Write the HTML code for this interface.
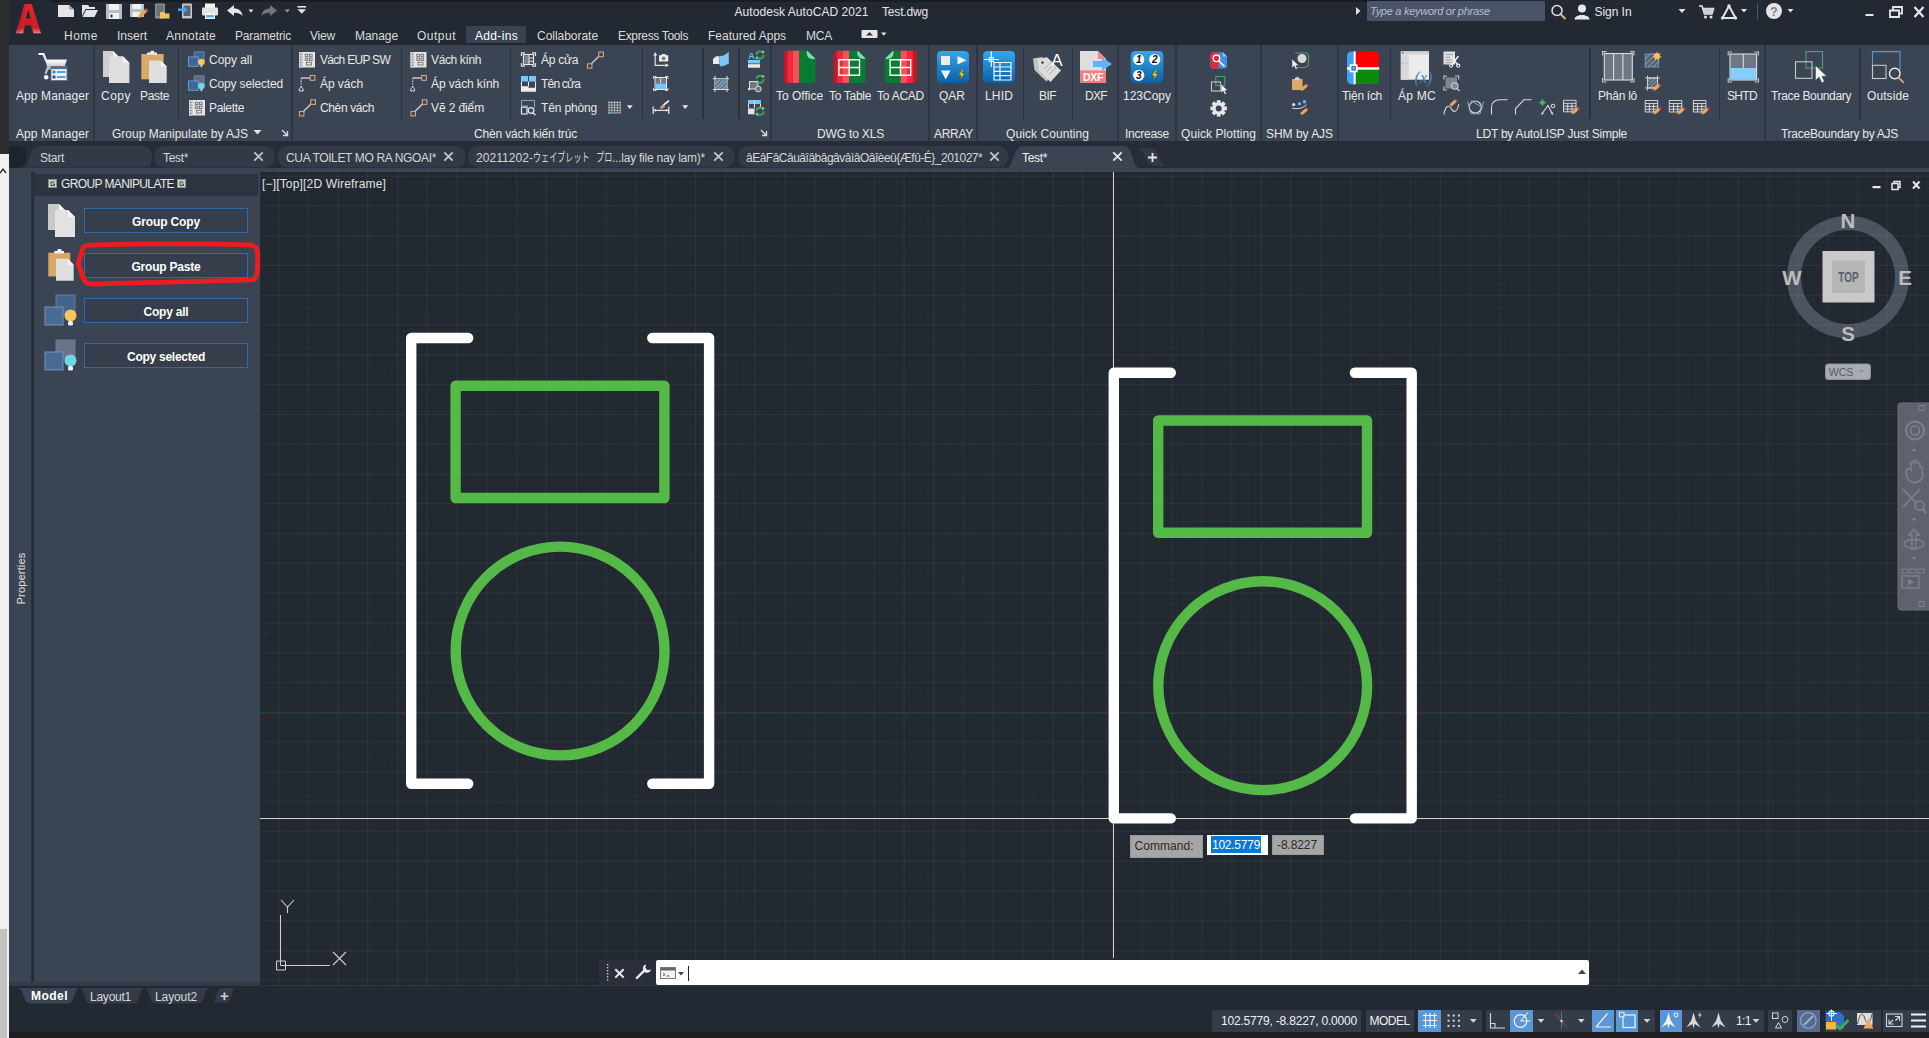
<!DOCTYPE html>
<html><head><meta charset="utf-8"><title>AutoCAD</title>
<style>
html,body{margin:0;padding:0}
body{width:1929px;height:1038px;position:relative;overflow:hidden;background:#222933;font-family:"Liberation Sans","Noto Sans CJK JP",sans-serif;font-size:12px;color:#e8e8e8}
body>div,body>svg{position:absolute;display:block}
</style></head><body>
<div style="left:0px;top:0px;width:9px;height:154px;background:#2b2d30;"></div>
<div style="left:0px;top:154px;width:9px;height:775px;background:#f0f0f0;"></div>
<div style="left:0px;top:929px;width:9px;height:109px;background:#f0f0f0;"></div>
<div style="left:0px;top:929px;width:7px;height:109px;background:#c1c1c1;"></div>
<svg style="left:0px;top:166px;" width="8" height="8" viewBox="0 0 8 8"><path d="M0 7 L3 3 L6 7" stroke="#222" stroke-width="1.3" fill="none"/></svg>
<div style="left:9px;top:0px;width:1920px;height:44px;background:#222933;"></div>
<div style="left:50px;top:0px;width:1400px;height:2px;background:#181c23;"></div>
<div style="left:9px;top:44px;width:1920px;height:97px;background:#3b4453;"></div>
<div style="left:9px;top:141px;width:1920px;height:31px;background:#262d38;"></div>
<div style="left:9px;top:168px;width:1920px;height:4px;background:#3b4453;"></div>
<div style="left:260px;top:172px;width:1669px;height:813px;background:#212830;background-color:#212830;background-image:linear-gradient(to right,rgba(120,135,160,.10) 1px,transparent 1px),linear-gradient(to bottom,rgba(120,135,160,.10) 1px,transparent 1px),linear-gradient(to right,rgba(120,135,160,.035) 1px,transparent 1px),linear-gradient(to bottom,rgba(120,135,160,.035) 1px,transparent 1px);background-size:29.8px 29.8px,29.8px 29.8px,5.96px 5.96px,5.96px 5.96px;background-position:17.9px 3.6px,17.9px 3.6px,17.9px 3.6px,17.9px 3.6px;"></div>
<div style="left:260px;top:713px;width:1669px;height:1px;background:rgba(110,40,50,.75);"></div>
<svg style="left:0px;top:0px;" width="1929" height="1038" viewBox="0 0 1929 1038"><path d="M1113.5 172 V958 M260 818.5 H1929" stroke="#d4d4d4" stroke-width="1" fill="none"/><path d="M468.2 338 H411.2 V783.7 H468.2" stroke="#ffffff" stroke-width="10.4" fill="none" stroke-linecap="round" stroke-linejoin="round"/><path d="M652.3 338 H709.1 V783.7 H652.3" stroke="#ffffff" stroke-width="10.4" fill="none" stroke-linecap="round" stroke-linejoin="round"/><rect x="455.6" y="385.8" width="208.8" height="112.2" stroke="#55b948" stroke-width="10.4" fill="none" stroke-linejoin="round"/><circle cx="560.1" cy="651" r="104.4" stroke="#55b948" stroke-width="10.4" fill="none" stroke-linejoin="round"/><path d="M1170.8 372.7 H1113.8 V818.4000000000001 H1170.8" stroke="#ffffff" stroke-width="10.4" fill="none" stroke-linecap="round" stroke-linejoin="round"/><path d="M1354.9 372.7 H1411.7 V818.4000000000001 H1354.9" stroke="#ffffff" stroke-width="10.4" fill="none" stroke-linecap="round" stroke-linejoin="round"/><rect x="1158.2" y="420.5" width="208.8" height="112.2" stroke="#55b948" stroke-width="10.4" fill="none" stroke-linejoin="round"/><circle cx="1262.7" cy="685.7" r="104.4" stroke="#55b948" stroke-width="10.4" fill="none" stroke-linejoin="round"/><path d="M280.5 915 V965.5 H330 M276.5 961 h9 v9 h-9 z" stroke="#d0d0d0" stroke-width="1" fill="none"/><path d="M281 900 L287.5 907 L294 900 M287.5 907 V913" stroke="#d0d0d0" stroke-width="1.1" fill="none"/><path d="M333 952 L346 965 M346 952 L333 965" stroke="#d0d0d0" stroke-width="1.1" fill="none"/></svg>
<div style="left:262px;top:176.0px;line-height:16px;font-size:12px;color:#e0e0e0;white-space:nowrap;letter-spacing:0.17px;">[−][Top][2D Wireframe]</div>
<div style="left:9px;top:172px;width:24px;height:813px;background:#3b4453;"></div>
<div style="left:31px;top:172px;width:2px;height:813px;background:#2a313c;"></div>
<div style="left:34px;top:172px;width:226px;height:813px;background:#3b4453;"></div>
<div style="left:34px;top:174px;width:224px;height:22px;background:#2c3441;"></div>
<div style="left:34px;top:196px;width:224px;height:786px;background:#3b4453;"></div>
<div style="left:9px;top:982px;width:251px;height:3px;background:#343c4a;"></div>
<div style="left:21px;top:570.5px;line-height:15px;font-size:11px;color:#e0e0e0;white-space:nowrap;letter-spacing:0.18px;transform:translate(-50%,0) rotate(-90deg);transform-origin:50% 50%;">Properties</div>
<svg style="left:48px;top:179px;" width="9" height="9" viewBox="0 0 9 9"><rect x="0.5" y="0.5" width="8" height="8" fill="#cfd3c4" stroke="#8a8f86" stroke-width="1"/><path d="M6.5 3 H3 V6.5 H6.5 V5 H5" stroke="#3b4453" stroke-width="1" fill="none"/></svg>
<svg style="left:177px;top:179px;" width="9" height="9" viewBox="0 0 9 9"><rect x="0.5" y="0.5" width="8" height="8" fill="#cfd3c4" stroke="#8a8f86" stroke-width="1"/><path d="M6.5 3 H3 V6.5 H6.5 V5 H5" stroke="#3b4453" stroke-width="1" fill="none"/></svg>
<div style="left:61px;top:176.0px;line-height:16px;font-size:12px;color:#e8e8e8;white-space:nowrap;letter-spacing:-0.62px;">GROUP MANIPULATE</div>
<div style="left:84px;top:208px;width:164px;height:25px;background:#363e4c;box-sizing:border-box;border:1px solid #2f6aa6;"></div>
<div style="left:166px;top:213.5px;line-height:16px;font-size:12px;color:#ffffff;white-space:nowrap;letter-spacing:-0.13px;font-weight:bold;transform:translateX(-50%);">Group Copy</div>
<div style="left:84px;top:253px;width:164px;height:25px;background:#363e4c;box-sizing:border-box;border:1px solid #2f6aa6;"></div>
<div style="left:166px;top:258.5px;line-height:16px;font-size:12px;color:#ffffff;white-space:nowrap;letter-spacing:-0.21px;font-weight:bold;transform:translateX(-50%);">Group Paste</div>
<div style="left:84px;top:298px;width:164px;height:25px;background:#363e4c;box-sizing:border-box;border:1px solid #2f6aa6;"></div>
<div style="left:166px;top:303.5px;line-height:16px;font-size:12px;color:#ffffff;white-space:nowrap;letter-spacing:-0.21px;font-weight:bold;transform:translateX(-50%);">Copy all</div>
<div style="left:84px;top:343px;width:164px;height:25px;background:#363e4c;box-sizing:border-box;border:1px solid #2f6aa6;"></div>
<div style="left:166px;top:348.5px;line-height:16px;font-size:12px;color:#ffffff;white-space:nowrap;letter-spacing:-0.26px;font-weight:bold;transform:translateX(-50%);">Copy selected</div>
<svg style="left:60px;top:230px;" width="210" height="70" viewBox="60 230 210 70"><path d="M86 245.6 C120 243.6,200 243.4,250 245 C257 245.4,257.6 250,257.7 256 C257.8 266,258.6 276.5,253.5 279.6 C230 281,150 282.3,95 284 C88 284.4,84.3 283,83.2 278 L78.2 263.4 L82.6 249 C83.2 246.6,84 245.7,86 245.6 Z" stroke="#ed1c24" stroke-width="4.8" fill="none" stroke-linejoin="round"/></svg>
<svg style="left:46px;top:200px;" width="34" height="40" viewBox="0 0 34 40"><path d="M2 4 H13 L20 11 V30 H2 Z" fill="#c9c9c9"/><path d="M13 4 V11 H20 Z" fill="#f6f6f6"/><path d="M9 10 H22 L29 17 V37 H9 Z" fill="#e2e2e2"/><path d="M22 10 V17 H29 Z" fill="#f6f6f6"/></svg>
<svg style="left:46px;top:246px;" width="34" height="40" viewBox="0 0 34 40"><rect x="2.3" y="6.7" width="22" height="23.8" fill="#d9a765"/><path d="M8.3 7.5 V5 H11 L12 3 H15 L16 5 H18 V7.5 Z" fill="#f0f0f0"/><path d="M10 12.7 H21.7 L27.7 18.7 V34.7 H10 Z" fill="#dedede"/><path d="M21.7 12.7 V18.7 H27.7 Z" fill="#f6f6f6"/></svg>
<svg style="left:44px;top:293px;" width="36" height="36" viewBox="0 0 36 36"><rect x="12" y="2" width="19" height="19" fill="#45648c" stroke="#5d7fa3" stroke-width="1"/><rect x="1" y="14" width="18" height="18" fill="#4a6a93" stroke="#6f93bb" stroke-width="1"/><circle cx="26.5" cy="22.5" r="6" fill="#f7c35f"/><rect x="24" y="28" width="5" height="4.5" rx="1.5" fill="#f0f0f0"/></svg>
<svg style="left:44px;top:338px;" width="36" height="36" viewBox="0 0 36 36"><rect x="12" y="2" width="19" height="19" fill="#6b7486" stroke="#5d7fa3" stroke-width="1"/><rect x="1" y="14" width="18" height="18" fill="#4a6a93" stroke="#6f93bb" stroke-width="1"/><circle cx="26.5" cy="22.5" r="6" fill="#6fd6e3"/><rect x="24" y="28" width="5" height="4.5" rx="1.5" fill="#f0f0f0"/></svg>
<div style="left:9px;top:985px;width:1920px;height:23px;background:#222933;"></div>
<div style="left:9px;top:985.3px;width:1920px;height:1.2px;background:#313845;"></div>
<div style="left:9px;top:1008px;width:1920px;height:24px;background:#222933;"></div>
<div style="left:9px;top:1032px;width:1920px;height:6px;background:#1f1f21;"></div>
<svg style="left:0px;top:985px;" width="260" height="22" viewBox="0 0 260 22"><path d="M18 3 C24 3,23 18.5,30 18.5 H68 C75 18.5,74 3,79.5 3 Z" fill="#3b4453"/><path d="M79.5 3 C85 3,84 18.5,90 18.5 H134 C140 18.5,139 3,144.5 3 Z" fill="#333b48"/><path d="M144.5 3 C150 3,149 18.5,155 18.5 H199 C205 18.5,204 3,210 3 Z" fill="#333b48"/><path d="M221 3 H236 C231 3,232 17.5,227 17.5 H212 C217 17.5,216 3,221 3 Z" fill="#333b48"/></svg>
<div style="left:31px;top:988.0px;line-height:16px;font-size:12px;color:#ffffff;white-space:nowrap;letter-spacing:0.47px;font-weight:bold;">Model</div>
<div style="left:90px;top:988.5px;line-height:16px;font-size:12px;color:#d8d8d8;white-space:nowrap;letter-spacing:-0.24px;">Layout1</div>
<div style="left:155px;top:988.5px;line-height:16px;font-size:12px;color:#d8d8d8;white-space:nowrap;letter-spacing:-0.10px;">Layout2</div>
<div style="left:224.5px;top:985.5px;line-height:19px;font-size:15px;color:#d0d0d0;white-space:nowrap;font-weight:bold;transform:translateX(-50%);">+</div>
<div style="left:599px;top:960px;width:57px;height:25px;background:#2a303b;"></div>
<div style="left:655.6px;top:960px;width:933px;height:25px;background:#ffffff;border-radius:2px;"></div>
<svg style="left:600px;top:960px;" width="56" height="25" viewBox="0 0 56 25"><path d="M7.6 4 V21.5" stroke="#c4c4c4" stroke-width="1.4" stroke-dasharray="1.4 1.6"/><path d="M15.3 9.2 L23.7 17.6 M23.7 9.2 L15.3 17.6" stroke="#ececec" stroke-width="2"/><path d="M36.8 18 L45 9.8" stroke="#ececec" stroke-width="2.4" stroke-linecap="round"/><path d="M46 4.6 A4.1 4.1 0 1 0 51 9.6 L47.6 10.2 L45.4 8 Z" fill="#ececec"/></svg>
<svg style="left:659.6px;top:967px;" width="26" height="13" viewBox="0 0 26 13"><rect x="0.5" y="0.5" width="15" height="11" fill="#f4f4f4" stroke="#777" stroke-width="1"/><rect x="1" y="1" width="14" height="2.5" fill="#666"/><path d="M3 6 l2 1.5 l-2 1.5 M6.5 9 h3" stroke="#555" stroke-width="1" fill="none"/><path d="M18 5 h6 l-3 3.5 z" fill="#444"/></svg>
<div style="left:687.6px;top:965.5px;width:1.2px;height:15.5px;background:#222;"></div>
<svg style="left:1577px;top:968px;" width="10" height="8" viewBox="0 0 10 8"><path d="M1 6 L5 1.5 L9 6 Z" fill="#444"/></svg>
<div style="left:1130px;top:835px;width:73px;height:23px;background:#a6a6a6;box-sizing:border-box;border:1px solid #969696;"></div>
<div style="left:1134.5px;top:837.5px;line-height:16px;font-size:12px;color:#2a2a2a;white-space:nowrap;letter-spacing:0.04px;">Command:</div>
<div style="left:1206.7px;top:834.8px;width:61.3px;height:20px;background:#ffffff;"></div>
<div style="left:1211px;top:836.3px;width:49.7px;height:16.6px;background:#0a78d7;"></div>
<div style="left:1212px;top:837.0px;line-height:16px;font-size:12px;color:#ffffff;white-space:nowrap;letter-spacing:-0.25px;">102.5779</div>
<div style="left:1271.6px;top:835px;width:52.4px;height:19.8px;background:#a6a6a6;box-sizing:border-box;border:1px solid #969696;"></div>
<div style="left:1277px;top:837.0px;line-height:16px;font-size:12px;color:#2a2a2a;white-space:nowrap;letter-spacing:-0.10px;">-8.8227</div>
<svg style="left:10px;top:0px;" width="40" height="38" viewBox="10 0 40 38"><defs><linearGradient id="ag" x1="0" y1="0" x2="0" y2="1"><stop offset="0" stop-color="#e2282c"/><stop offset=".82" stop-color="#cf1f28"/><stop offset=".96" stop-color="#e8646a"/><stop offset="1" stop-color="#f4a8a0"/></linearGradient></defs><path fill-rule="evenodd" d="M24.5 4 H31.7 L41 33.3 H33.4 L31 25.2 H24.9 L23.3 33.3 H15.8 Z M28.3 9.7 L30.9 18.4 H25.5 Z" fill="url(#ag)"/><path d="M24.5 4 L27 4 L19 33.3 H15.8 Z" fill="#b0141c" opacity=".35"/><path d="M24.2 21 L31.5 18.4 L32.5 22 L24.6 25.2 Z" fill="#b0141c" opacity=".35"/></svg>
<svg style="left:0px;top:0px;" width="320" height="24" viewBox="0 0 320 24"><path d="M58 5 H69 L74 9.5 V17 H58 Z" fill="#e4e4e4"/><path d="M69 5 V9.5 H74 Z" fill="#9aa0a8"/><path d="M82 5 H88 L89.5 7 H95 V9 H85.5 L82 16 Z" fill="#e4e4e4"/><path d="M86 10 H98 L94.5 17 H82.5 Z" fill="#e4e4e4"/><path d="M106 4 H122 V19 H106 Z" fill="#b9bec6"/><rect x="109" y="4" width="10" height="6" fill="#f2f2f2"/><rect x="109" y="13" width="10" height="6" fill="#f2f2f2"/><rect x="110.5" y="14.5" width="2" height="3" fill="#333"/><path d="M130 4 H144 V17 H130 Z" fill="#b9bec6"/><rect x="132.5" y="4" width="9" height="5" fill="#f2f2f2"/><rect x="132.5" y="12" width="8" height="5" fill="#f2f2f2"/><path d="M138 18 L139 14.5 L144.5 9.5 L147 12 L141.5 17 Z" fill="#e9a15a"/><path d="M144.5 9.5 L145.8 8.3 L148.2 10.8 L147 12 Z" fill="#e05a5a"/><rect x="155" y="3.5" width="10" height="15" rx="1" fill="#8b9097"/><rect x="156.5" y="5" width="7" height="11" fill="#6d7279"/><path d="M160 12 H164 L165 13.5 H169.5 V18.5 H160 Z" fill="#f3c35a"/><rect x="182" y="3.5" width="10" height="15" rx="1" fill="#c4c8ce"/><rect x="183.5" y="5.5" width="7" height="10.5" fill="#5c626b"/><path d="M178 8.5 H183.5 V6.5 L187.5 9.7 L183.5 13 V11 H178 Z" fill="#3ea7ee"/><rect x="205" y="3.5" width="10" height="5" fill="#f4f4f4"/><rect x="202" y="7.5" width="16" height="8" rx="1" fill="#e4e4e4"/><rect x="205" y="13" width="10" height="6" fill="#f8f8f8"/><rect x="206" y="15" width="8" height="2.5" fill="#56b4ea"/><path d="M227 10.5 L234 5 V8.5 C239 8.5,242 11,242.5 16 C240.5 13.5,238 12.8,234 12.8 V16 Z" fill="#e4e4e4"/><path d="M248.5 9.5 h5 l-2.5 3 z" fill="#e4e4e4"/><path d="M277 10.5 L270 5 V8.5 C265 8.5,262 11,261.5 16 C263.5 13.5,266 12.8,270 12.8 V16 Z" fill="#6e7681"/><path d="M284.8 9.5 h5 l-2.5 3 z" fill="#9aa0a8"/><rect x="297.5" y="6" width="8.5" height="1.6" fill="#e4e4e4"/><path d="M297.5 9.3 h8.5 l-4.25 4.5 z" fill="#e4e4e4"/></svg>
<div style="left:734.5px;top:4.0px;line-height:16px;font-size:12px;color:#e6e6e6;white-space:nowrap;letter-spacing:0.06px;">Autodesk AutoCAD 2021</div>
<div style="left:882px;top:4.0px;line-height:16px;font-size:12px;color:#e6e6e6;white-space:nowrap;letter-spacing:-0.17px;">Test.dwg</div>
<svg style="left:1354px;top:6px;" width="8" height="10" viewBox="0 0 8 10"><path d="M2 1 L6.5 5 L2 9 Z" fill="#e4e4e4"/></svg>
<div style="left:1367px;top:1px;width:178px;height:20px;background:#4a5468;"></div>
<div style="left:1370px;top:4.0px;line-height:15px;font-size:11px;color:#b6bccb;white-space:nowrap;letter-spacing:-0.27px;font-style:italic;">Type a keyword or phrase</div>
<svg style="left:1550px;top:2px;" width="42" height="20" viewBox="0 0 42 20"><circle cx="7" cy="8.5" r="5" stroke="#e4e4e4" stroke-width="1.5" fill="none"/><path d="M10.7 12.2 L15.5 17" stroke="#d8b98c" stroke-width="2"/><circle cx="32" cy="6.5" r="4" fill="#e8e8e8"/><path d="M24.5 17.5 C24.5 11.5,39.5 11.5,39.5 17.5 Z" fill="#e8e8e8"/></svg>
<div style="left:1594.5px;top:4.0px;line-height:16px;font-size:12px;color:#e8e8e8;white-space:nowrap;letter-spacing:-0.05px;">Sign In</div>
<svg style="left:1678px;top:8px;" width="8" height="6" viewBox="0 0 8 6"><path d="M0.5 1 h7 l-3.5 4 z" fill="#e4e4e4"/></svg>
<svg style="left:1697px;top:3px;" width="60" height="18" viewBox="0 0 60 18"><path d="M2 3 H5 L7.5 11 H15 L16.5 5.5 H6" stroke="#e4e4e4" stroke-width="1.6" fill="none"/><path d="M6 5.5 H16.5 L15 11 H7.5 Z" fill="#cfcfcf"/><circle cx="8.5" cy="14" r="1.5" fill="#e4e4e4"/><circle cx="14" cy="14" r="1.5" fill="#e4e4e4"/><path d="M32 3 L38.5 15 H25.5 Z" stroke="#e4e4e4" stroke-width="2" fill="none" stroke-linejoin="round"/><circle cx="32" cy="3" r="1.7" fill="#e4e4e4"/><circle cx="25.5" cy="15" r="1.7" fill="#e4e4e4"/><circle cx="38.5" cy="15" r="1.7" fill="#e4e4e4"/><path d="M44 6 h6 l-3 3.5 z" fill="#e4e4e4"/></svg>
<div style="left:1757px;top:3px;width:1px;height:16px;background:#505866;"></div>
<svg style="left:1765px;top:2px;" width="36" height="20" viewBox="0 0 36 20"><circle cx="9" cy="9" r="8" fill="#e4e4e4"/><text x="9" y="13.5" font-size="12" font-weight="bold" text-anchor="middle" fill="#7a7f88" font-family="Liberation Sans, sans-serif">?</text><path d="M22.5 7 h6 l-3 3.5 z" fill="#e4e4e4"/></svg>
<svg style="left:1860px;top:2px;" width="66" height="20" viewBox="0 0 66 20"><rect x="5.5" y="12" width="8" height="2" fill="#e8e8e8"/><path d="M30 8.5 H39 V15 H30 Z M33 8.5 V5 H42 V11.5 H39" stroke="#e8e8e8" stroke-width="1.8" fill="none"/><path d="M54.5 5 L63.5 15 M63.5 5 L54.5 15" stroke="#e8e8e8" stroke-width="2.2"/></svg>
<div style="left:466px;top:26.2px;width:60.4px;height:16.8px;background:#3a4352;"></div>
<div style="left:9px;top:43px;width:1920px;height:1.6px;background:#222933;"></div>
<div style="left:64px;top:27.5px;line-height:16px;font-size:12px;color:#dcdcdc;white-space:nowrap;letter-spacing:0.50px;">Home</div>
<div style="left:117px;top:27.5px;line-height:16px;font-size:12px;color:#dcdcdc;white-space:nowrap;letter-spacing:0.00px;">Insert</div>
<div style="left:166px;top:27.5px;line-height:16px;font-size:12px;color:#dcdcdc;white-space:nowrap;letter-spacing:0.25px;">Annotate</div>
<div style="left:235px;top:27.5px;line-height:16px;font-size:12px;color:#dcdcdc;white-space:nowrap;letter-spacing:-0.20px;">Parametric</div>
<div style="left:310px;top:27.5px;line-height:16px;font-size:12px;color:#dcdcdc;white-space:nowrap;letter-spacing:-0.20px;">View</div>
<div style="left:355px;top:27.5px;line-height:16px;font-size:12px;color:#dcdcdc;white-space:nowrap;letter-spacing:-0.06px;">Manage</div>
<div style="left:417px;top:27.5px;line-height:16px;font-size:12px;color:#dcdcdc;white-space:nowrap;letter-spacing:0.50px;">Output</div>
<div style="left:475px;top:27.5px;line-height:16px;font-size:12px;color:#ffffff;white-space:nowrap;letter-spacing:0.33px;">Add-ins</div>
<div style="left:537px;top:27.5px;line-height:16px;font-size:12px;color:#dcdcdc;white-space:nowrap;letter-spacing:-0.03px;">Collaborate</div>
<div style="left:618px;top:27.5px;line-height:16px;font-size:12px;color:#dcdcdc;white-space:nowrap;letter-spacing:-0.34px;">Express Tools</div>
<div style="left:708px;top:27.5px;line-height:16px;font-size:12px;color:#dcdcdc;white-space:nowrap;letter-spacing:-0.00px;">Featured Apps</div>
<div style="left:806px;top:27.5px;line-height:16px;font-size:12px;color:#dcdcdc;white-space:nowrap;letter-spacing:-0.22px;">MCA</div>
<svg style="left:860px;top:28px;" width="30" height="12" viewBox="0 0 30 12"><rect x="1.5" y="2" width="16" height="8" rx="1" fill="#e8e8e8"/><path d="M6 7.5 L9.5 4 L13 7.5 Z" fill="#333"/><path d="M21 4.5 h5.5 l-2.75 3.3 z" fill="#e4e4e4"/></svg>
<div style="left:93.0px;top:45px;width:2px;height:95.5px;background:#2e3643;"></div>
<div style="left:290.5px;top:45px;width:2px;height:95.5px;background:#2e3643;"></div>
<div style="left:769.5px;top:45px;width:2px;height:95.5px;background:#2e3643;"></div>
<div style="left:928.0px;top:45px;width:2px;height:95.5px;background:#2e3643;"></div>
<div style="left:975.5px;top:45px;width:2px;height:95.5px;background:#2e3643;"></div>
<div style="left:1116.5px;top:45px;width:2px;height:95.5px;background:#2e3643;"></div>
<div style="left:1174.5px;top:45px;width:2px;height:95.5px;background:#2e3643;"></div>
<div style="left:1259.5px;top:45px;width:2px;height:95.5px;background:#2e3643;"></div>
<div style="left:1336.5px;top:45px;width:2px;height:95.5px;background:#2e3643;"></div>
<div style="left:1764.0px;top:45px;width:2px;height:95.5px;background:#2e3643;"></div>
<div style="left:177.5px;top:48px;width:1.5px;height:71px;background:#2b323d;"></div>
<div style="left:400.5px;top:48px;width:1.5px;height:71px;background:#2b323d;"></div>
<div style="left:509.5px;top:48px;width:1.5px;height:71px;background:#2b323d;"></div>
<div style="left:641.5px;top:48px;width:1.5px;height:71px;background:#2b323d;"></div>
<div style="left:702.0px;top:48px;width:1.5px;height:71px;background:#2b323d;"></div>
<div style="left:738.0px;top:48px;width:1.5px;height:71px;background:#2b323d;"></div>
<div style="left:1022.5px;top:48px;width:1.5px;height:71px;background:#2b323d;"></div>
<div style="left:1071.5px;top:48px;width:1.5px;height:71px;background:#2b323d;"></div>
<div style="left:1389.5px;top:48px;width:1.5px;height:71px;background:#2b323d;"></div>
<div style="left:1589.0px;top:48px;width:1.5px;height:71px;background:#2b323d;"></div>
<div style="left:1718.5px;top:48px;width:1.5px;height:71px;background:#2b323d;"></div>
<div style="left:1859.0px;top:48px;width:1.5px;height:71px;background:#2b323d;"></div>
<div style="left:16px;top:125.5px;line-height:16px;font-size:12px;color:#e8e8e8;white-space:nowrap;letter-spacing:0.09px;">App Manager</div>
<div style="left:112px;top:125.5px;line-height:16px;font-size:12px;color:#e8e8e8;white-space:nowrap;letter-spacing:-0.00px;">Group Manipulate by AJS</div>
<div style="left:474px;top:125.5px;line-height:16px;font-size:12px;color:#e8e8e8;white-space:nowrap;letter-spacing:-0.16px;">Chèn vách kiến trúc</div>
<div style="left:817px;top:125.5px;line-height:16px;font-size:12px;color:#e8e8e8;white-space:nowrap;letter-spacing:-0.17px;">DWG to XLS</div>
<div style="left:934px;top:125.5px;line-height:16px;font-size:12px;color:#e8e8e8;white-space:nowrap;letter-spacing:-0.29px;">ARRAY</div>
<div style="left:1006px;top:125.5px;line-height:16px;font-size:12px;color:#e8e8e8;white-space:nowrap;letter-spacing:0.07px;">Quick Counting</div>
<div style="left:1125px;top:125.5px;line-height:16px;font-size:12px;color:#e8e8e8;white-space:nowrap;letter-spacing:-0.25px;">Increase</div>
<div style="left:1181px;top:125.5px;line-height:16px;font-size:12px;color:#e8e8e8;white-space:nowrap;letter-spacing:0.07px;">Quick Plotting</div>
<div style="left:1266px;top:125.5px;line-height:16px;font-size:12px;color:#e8e8e8;white-space:nowrap;letter-spacing:-0.03px;">SHM by AJS</div>
<div style="left:1476px;top:125.5px;line-height:16px;font-size:12px;color:#e8e8e8;white-space:nowrap;letter-spacing:-0.22px;">LDT by AutoLISP Just Simple</div>
<div style="left:1781px;top:125.5px;line-height:16px;font-size:12px;color:#e8e8e8;white-space:nowrap;letter-spacing:-0.26px;">TraceBoundary by AJS</div>
<svg style="left:253px;top:129px;" width="10" height="7" viewBox="0 0 10 7"><path d="M0.5 1 h8 l-4 4.5 z" fill="#e4e4e4"/></svg>
<svg style="left:281px;top:129px;" width="8" height="8" viewBox="0 0 8 8"><path d="M1 1 L6 6 M6.5 2 V6.5 H2" stroke="#d8d8d8" stroke-width="1.4" fill="none"/></svg>
<svg style="left:760px;top:129px;" width="8" height="8" viewBox="0 0 8 8"><path d="M1 1 L6 6 M6.5 2 V6.5 H2" stroke="#d8d8d8" stroke-width="1.4" fill="none"/></svg>
<div style="left:16px;top:88.0px;line-height:16px;font-size:12px;color:#e8e8e8;white-space:nowrap;letter-spacing:0.09px;">App Manager</div>
<div style="left:101px;top:88.0px;line-height:16px;font-size:12px;color:#e8e8e8;white-space:nowrap;letter-spacing:0.50px;">Copy</div>
<div style="left:140px;top:88.0px;line-height:16px;font-size:12px;color:#e8e8e8;white-space:nowrap;letter-spacing:-0.33px;">Paste</div>
<div style="left:776px;top:88.0px;line-height:16px;font-size:12px;color:#e8e8e8;white-space:nowrap;letter-spacing:-0.01px;">To Office</div>
<div style="left:829px;top:88.0px;line-height:16px;font-size:12px;color:#e8e8e8;white-space:nowrap;letter-spacing:-0.31px;">To Table</div>
<div style="left:877px;top:88.0px;line-height:16px;font-size:12px;color:#e8e8e8;white-space:nowrap;letter-spacing:-0.24px;">To ACAD</div>
<div style="left:939px;top:88.0px;line-height:16px;font-size:12px;color:#e8e8e8;white-space:nowrap;letter-spacing:0.00px;">QAR</div>
<div style="left:985px;top:88.0px;line-height:16px;font-size:12px;color:#e8e8e8;white-space:nowrap;letter-spacing:0.16px;">LHID</div>
<div style="left:1039px;top:88.0px;line-height:16px;font-size:12px;color:#e8e8e8;white-space:nowrap;letter-spacing:-0.55px;">BIF</div>
<div style="left:1085px;top:88.0px;line-height:16px;font-size:12px;color:#e8e8e8;white-space:nowrap;letter-spacing:-0.67px;">DXF</div>
<div style="left:1123px;top:88.0px;line-height:16px;font-size:12px;color:#e8e8e8;white-space:nowrap;letter-spacing:-0.00px;">123Copy</div>
<div style="left:1342px;top:88.0px;line-height:16px;font-size:12px;color:#e8e8e8;white-space:nowrap;letter-spacing:-0.28px;">Tiện ích</div>
<div style="left:1398px;top:88.0px;line-height:16px;font-size:12px;color:#e8e8e8;white-space:nowrap;letter-spacing:0.27px;">Áp MC</div>
<div style="left:1598px;top:88.0px;line-height:16px;font-size:12px;color:#e8e8e8;white-space:nowrap;letter-spacing:-0.24px;">Phân lô</div>
<div style="left:1727px;top:88.0px;line-height:16px;font-size:12px;color:#e8e8e8;white-space:nowrap;letter-spacing:-0.67px;">SHTD</div>
<div style="left:1771px;top:88.0px;line-height:16px;font-size:12px;color:#e8e8e8;white-space:nowrap;letter-spacing:-0.35px;">Trace Boundary</div>
<div style="left:1867px;top:88.0px;line-height:16px;font-size:12px;color:#e8e8e8;white-space:nowrap;letter-spacing:0.09px;">Outside</div>
<div style="left:209px;top:52.0px;line-height:16px;font-size:12px;color:#e8e8e8;white-space:nowrap;letter-spacing:-0.04px;">Copy all</div>
<div style="left:209px;top:76.0px;line-height:16px;font-size:12px;color:#e8e8e8;white-space:nowrap;letter-spacing:-0.16px;">Copy selected</div>
<div style="left:209px;top:100.0px;line-height:16px;font-size:12px;color:#e8e8e8;white-space:nowrap;letter-spacing:-0.33px;">Palette</div>
<div style="left:320px;top:52.0px;line-height:16px;font-size:12px;color:#e8e8e8;white-space:nowrap;letter-spacing:-0.71px;">Vách EUP SW</div>
<div style="left:320px;top:76.0px;line-height:16px;font-size:12px;color:#e8e8e8;white-space:nowrap;letter-spacing:-0.05px;">Áp vách</div>
<div style="left:320px;top:100.0px;line-height:16px;font-size:12px;color:#e8e8e8;white-space:nowrap;letter-spacing:-0.37px;">Chèn vách</div>
<div style="left:431px;top:52.0px;line-height:16px;font-size:12px;color:#e8e8e8;white-space:nowrap;letter-spacing:-0.37px;">Vách kính</div>
<div style="left:431px;top:76.0px;line-height:16px;font-size:12px;color:#e8e8e8;white-space:nowrap;letter-spacing:-0.11px;">Áp vách kính</div>
<div style="left:431px;top:100.0px;line-height:16px;font-size:12px;color:#e8e8e8;white-space:nowrap;letter-spacing:-0.11px;">Vẽ 2 điểm</div>
<div style="left:541px;top:52.0px;line-height:16px;font-size:12px;color:#e8e8e8;white-space:nowrap;letter-spacing:-0.28px;">Áp cửa</div>
<div style="left:541px;top:76.0px;line-height:16px;font-size:12px;color:#e8e8e8;white-space:nowrap;letter-spacing:-0.81px;">Tên cửa</div>
<div style="left:541px;top:100.0px;line-height:16px;font-size:12px;color:#e8e8e8;white-space:nowrap;letter-spacing:-0.15px;">Tên phòng</div>
<svg style="left:0;top:0" width="1929" height="141" viewBox="0 0 1929 141"><defs><linearGradient id="blu" x1="0" y1="0" x2="0" y2="1"><stop offset="0" stop-color="#35a7ea"/><stop offset="1" stop-color="#0b5fa8"/></linearGradient><linearGradient id="cart" x1="0" y1="0" x2="0" y2="1"><stop offset="0" stop-color="#ffffff"/><stop offset="1" stop-color="#aeb4bd"/></linearGradient><linearGradient id="redg" x1="0" y1="0" x2="1" y2="0"><stop offset="0" stop-color="#d81e2c"/><stop offset=".5" stop-color="#f2454f"/><stop offset="1" stop-color="#d81e2c"/></linearGradient></defs><path d="M38.5 54 H43.5 L46 60.5 H65.5 L63 68.5 H47.5 L45.5 74" stroke="url(#cart)" stroke-width="2.2" fill="none"/><path d="M45.5 60.5 H65.5 L63 68.5 H47.5 Z" fill="url(#cart)"/><circle cx="46.2" cy="77.3" r="2.3" fill="#f4f4f4"/><rect x="51" y="66.5" width="16" height="14" fill="#eef3f8" stroke="#5c6b80" stroke-width="0.8"/><rect x="51" y="66.5" width="16" height="2.6" fill="#5c6b80"/><rect x="52.5" y="70.5" width="3" height="3" fill="#2f8fd6"/><rect x="57" y="71.2" width="8.5" height="1.6" fill="#2f8fd6"/><rect x="52.5" y="75.5" width="3" height="3" fill="#4a4a8a"/><rect x="57" y="76.2" width="8.5" height="1.6" fill="#2f8fd6"/><path d="M103 51 H113.0 L119.5 57.5 V77 H103 Z" fill="#cfcfcf"/><path d="M113.0 51 V57.5 H119.5 Z" fill="#f4f4f4"/><path d="M109 56.2 H122.9 L129.4 62.7 V82.9 H109 Z" fill="#dedede"/><path d="M122.9 56.2 V62.7 H129.4 Z" fill="#f4f4f4"/><rect x="141.3" y="54" width="22.3" height="25.3" fill="#dba968"/><path d="M147 54.8 V52.5 H150 L151 50.8 H153.5 L154.5 52.5 H157 V54.8 Z" fill="#ececec"/><path d="M149 60.6 H160.7 L166.7 66.6 V82.9 H149 Z" fill="#dedede"/><path d="M160.7 60.6 V66.6 H166.7 Z" fill="#f4f4f4"/><rect x="194.2" y="51.8" width="9.8" height="9.8" fill="#3f6796" stroke="#5b87b8" stroke-width="1"/><rect x="188.5" y="57.0" width="9.8" height="9.3" fill="#3f6796" stroke="#6b9ccd" stroke-width="1"/><circle cx="201.4" cy="62.099999999999994" r="3.3" fill="#f8c660"/><path d="M199.9 65.6 h3 l-1.5 2 z" fill="#f0f0f0"/><rect x="194.2" y="75.8" width="9.8" height="9.8" fill="#666c78" stroke="#5b87b8" stroke-width="1"/><rect x="188.5" y="81.0" width="9.8" height="9.3" fill="#3f6796" stroke="#6b9ccd" stroke-width="1"/><circle cx="201.4" cy="86.1" r="3.3" fill="#6fd8e4"/><path d="M199.9 89.6 h3 l-1.5 2 z" fill="#f0f0f0"/><rect x="189" y="100" width="16" height="15.5" fill="#e6e6e6"/><rect x="189" y="100" width="4" height="15.5" fill="#d0d0d0"/><rect x="190" y="102.0" width="2" height="0.9" fill="#8a8a8a"/><rect x="190" y="104.7" width="2" height="0.9" fill="#8a8a8a"/><rect x="190" y="107.4" width="2" height="0.9" fill="#8a8a8a"/><rect x="190" y="110.1" width="2" height="0.9" fill="#8a8a8a"/><rect x="190" y="112.8" width="2" height="0.9" fill="#8a8a8a"/><rect x="195.3" y="102.3" width="2.6" height="2.4" fill="none" stroke="#707070" stroke-width="0.9"/><rect x="199.5" y="102.3" width="2.6" height="2.4" fill="none" stroke="#707070" stroke-width="0.9"/><rect x="195.3" y="106.1" width="2.6" height="2.4" fill="none" stroke="#707070" stroke-width="0.9"/><rect x="199.5" y="106.1" width="2.6" height="2.4" fill="none" stroke="#707070" stroke-width="0.9"/><rect x="196.5" y="110.3" width="5" height="2.7" fill="none" stroke="#707070" stroke-width="0.9"/><rect x="299" y="52" width="16" height="15.5" fill="#e6e6e6"/><rect x="299" y="52" width="4" height="15.5" fill="#d0d0d0"/><rect x="300" y="54.0" width="2" height="0.9" fill="#8a8a8a"/><rect x="300" y="56.7" width="2" height="0.9" fill="#8a8a8a"/><rect x="300" y="59.4" width="2" height="0.9" fill="#8a8a8a"/><rect x="300" y="62.1" width="2" height="0.9" fill="#8a8a8a"/><rect x="300" y="64.8" width="2" height="0.9" fill="#8a8a8a"/><rect x="305.3" y="54.3" width="2.6" height="2.4" fill="none" stroke="#707070" stroke-width="0.9"/><rect x="309.5" y="54.3" width="2.6" height="2.4" fill="none" stroke="#707070" stroke-width="0.9"/><rect x="305.3" y="58.099999999999994" width="2.6" height="2.4" fill="none" stroke="#707070" stroke-width="0.9"/><rect x="309.5" y="58.099999999999994" width="2.6" height="2.4" fill="none" stroke="#707070" stroke-width="0.9"/><rect x="306.5" y="62.3" width="5" height="2.7" fill="none" stroke="#707070" stroke-width="0.9"/><rect x="410.5" y="52" width="16" height="15.5" fill="#e6e6e6"/><rect x="410.5" y="52" width="4" height="15.5" fill="#d0d0d0"/><rect x="411.5" y="54.0" width="2" height="0.9" fill="#8a8a8a"/><rect x="411.5" y="56.7" width="2" height="0.9" fill="#8a8a8a"/><rect x="411.5" y="59.4" width="2" height="0.9" fill="#8a8a8a"/><rect x="411.5" y="62.1" width="2" height="0.9" fill="#8a8a8a"/><rect x="411.5" y="64.8" width="2" height="0.9" fill="#8a8a8a"/><rect x="416.8" y="54.3" width="2.6" height="2.4" fill="none" stroke="#707070" stroke-width="0.9"/><rect x="421.0" y="54.3" width="2.6" height="2.4" fill="none" stroke="#707070" stroke-width="0.9"/><rect x="416.8" y="58.099999999999994" width="2.6" height="2.4" fill="none" stroke="#707070" stroke-width="0.9"/><rect x="421.0" y="58.099999999999994" width="2.6" height="2.4" fill="none" stroke="#707070" stroke-width="0.9"/><rect x="418.0" y="62.3" width="5" height="2.7" fill="none" stroke="#707070" stroke-width="0.9"/><path d="M301.2 78 H310" stroke="#d8d8d8" stroke-width="1.3"/><path d="M301.2 78 V87.5" stroke="#d8d8d8" stroke-width="1.2" stroke-dasharray="1.3 1.3"/><rect x="310.2" y="75.5" width="4.6" height="4.8" fill="#4a3e3c" stroke="#c9a990" stroke-width="1.1"/><path d="M299.3 91 V88.8 L301.2 87 L303.1 88.8 V91 Z" stroke="#e0e0e0" stroke-width="1" fill="none"/><path d="M412.7 78 H421.5" stroke="#d8d8d8" stroke-width="1.3"/><path d="M412.7 78 V87.5" stroke="#d8d8d8" stroke-width="1.2" stroke-dasharray="1.3 1.3"/><rect x="421.7" y="75.5" width="4.6" height="4.8" fill="#4a3e3c" stroke="#c9a990" stroke-width="1.1"/><path d="M410.8 91 V88.8 L412.7 87 L414.6 88.8 V91 Z" stroke="#e0e0e0" stroke-width="1" fill="none"/><path d="M302.8 112.0 L311.5 103.5" stroke="#d8d8d8" stroke-width="1.2"/><rect x="299.5" y="111.5" width="4.4" height="4.4" fill="#4a3e3c" stroke="#c9a990" stroke-width="1.1"/><rect x="310.8" y="99.8" width="4.6" height="4.6" fill="#4a3e3c" stroke="#c9a990" stroke-width="1.1"/><path d="M414.3 112.0 L423.0 103.5" stroke="#d8d8d8" stroke-width="1.2"/><rect x="411.0" y="111.5" width="4.4" height="4.4" fill="#4a3e3c" stroke="#c9a990" stroke-width="1.1"/><rect x="422.3" y="99.8" width="4.6" height="4.6" fill="#4a3e3c" stroke="#c9a990" stroke-width="1.1"/><path d="M590.8 64.3 L599.5 55.8" stroke="#d8d8d8" stroke-width="1.2"/><rect x="587.5" y="63.8" width="4.4" height="4.4" fill="#4a3e3c" stroke="#c9a990" stroke-width="1.1"/><rect x="598.8" y="52.099999999999994" width="4.6" height="4.6" fill="#4a3e3c" stroke="#c9a990" stroke-width="1.1"/><path d="M521.5 56 V52.8 H525 M532 52.8 H535.5 V56 M535.5 63 V66.2 H532 M525 66.2 H521.5 V63" stroke="#e4e4e4" stroke-width="1.2" fill="none"/><rect x="523.5" y="54.5" width="10" height="10" fill="none" stroke="#e4e4e4" stroke-width="1.2"/><rect x="524.3" y="55.3" width="4.5" height="8.6" fill="#7c8493"/><path d="M529 54.5 V64.5 M529 58 H533.5 M529 61.2 H533.5" stroke="#e4e4e4" stroke-width="1.1"/><rect x="521" y="76" width="15" height="5.5" fill="#7cc6f7"/><path d="M528.5 76 V86" stroke="#3b4453" stroke-width="1"/><path d="M521.5 81.5 V91 M535.5 81.5 V91 M528.5 81.5 V86.5" stroke="#e8e8e8" stroke-width="1.1"/><path d="M521 86.2 H528.5 V87.8 H536 V91.7 H521 Z" fill="#ececec"/><path d="M521.5 100.5 H534.5 V107.5 M521.5 100.5 V106 H528 " stroke="#8fa4bf" stroke-width="1" fill="none"/><rect x="521.5" y="107.2" width="5.5" height="6.8" fill="none" stroke="#e4e4e4" stroke-width="1.2"/><circle cx="531" cy="110.5" r="2.8" fill="none" stroke="#e4e4e4" stroke-width="1.3"/><path d="M533 112.7 L535.5 115.3" stroke="#e4e4e4" stroke-width="1.3"/><path d="M609.0 101 V113.5 M608 102.5 H621" stroke="#c4c4c4" stroke-width="0.75"/><path d="M611.8 101 V113.5 M608 105.1 H621" stroke="#c4c4c4" stroke-width="0.75"/><path d="M614.6 101 V113.5 M608 107.7 H621" stroke="#c4c4c4" stroke-width="0.75"/><path d="M617.4 101 V113.5 M608 110.3 H621" stroke="#c4c4c4" stroke-width="0.75"/><path d="M620.2 101 V113.5 M608 112.9 H621" stroke="#c4c4c4" stroke-width="0.75"/><rect x="608" y="112" width="2" height="2" fill="#4fb0f0"/><path d="M626.8 105.3 h6 l-3 3.6 z" fill="#e4e4e4"/><path d="M682.2 105.3 h6 l-3 3.6 z" fill="#e4e4e4"/><path d="M655.2 54 V65.3 H666" stroke="#e4e4e4" stroke-width="1.2" fill="none"/><path d="M653.2 55.5 L655.2 52 L657.2 55.5 Z M665.5 63.3 L669 65.3 L665.5 67.3 Z" fill="#e4e4e4"/><path d="M659 55.2 H661.3 L662 54 H665.3 L666 55.2 H668.3 V61.5 H659 Z" fill="#ececec"/><circle cx="663.6" cy="58.3" r="1.9" fill="#8b7a6a"/><path d="M653.5 79 V76.5 H656.5 M665 76.5 H668 V79 M668 88 V90.5 H665 M656.5 90.5 H653.5 V88" stroke="#d8d8d8" stroke-width="1" fill="none"/><rect x="655" y="77.5" width="11.5" height="6" fill="#6f7786"/><path d="M660.7 77.5 V83.5" stroke="#e4e4e4" stroke-width="1"/><rect x="655" y="77.5" width="11.5" height="12" fill="none" stroke="#e4e4e4" stroke-width="1"/><rect x="655.5" y="83.5" width="10.5" height="5.5" fill="#7cc6f7"/><path d="M653.2 106.5 V114 M668.8 106.5 V114 M653.2 110.3 H668.8" stroke="#e4e4e4" stroke-width="1.2"/><path d="M653.5 110.3 l2.5 -1.4 v2.8 z M668.5 110.3 l-2.5 -1.4 v2.8 z" fill="#e4e4e4"/><path d="M663.5 105 L668.6 101" stroke="#f0f0f0" stroke-width="1.6" stroke-linecap="round"/><path d="M659.8 108.5 C660.5 105.5,662.5 104.3,664.3 105 L665 106.2 C664.5 108,662.5 108.8,659.8 108.5 Z" fill="#c9a37c"/><path d="M713 59 L716 56.3 H719.3 V64 H713 Z" fill="#e9e9e9"/><path d="M719.3 56 C722.5 56.5,725.5 54.5,728.8 52 V63.5 C725.5 65.5,722.5 66.5,720.2 66.3 L719.3 64 Z" fill="#7cc6f7"/><path d="M712.8 78.8 H729 M712.8 89.5 H729 M715 76 V92 M727 76 V92" stroke="#e0e0e0" stroke-width="1.1"/><rect x="715.5" y="79.3" width="11" height="9.7" fill="#6f7786"/><path d="M715.5 84 L720 79.3 M715.5 88.5 L724.5 79.3 M718.5 89 L726.5 80.7 M723 89 L726.5 85.3" stroke="#7cc6f7" stroke-width="1"/><text x="751.5" y="58.6" font-size="9" font-weight="bold" text-anchor="middle" fill="#6db7f2" font-family="Liberation Sans, sans-serif">A</text><circle cx="760" cy="55" r="3.6" fill="none" stroke="#3fa35a" stroke-width="2" stroke-dasharray="7.9 3.4"/><path d="M761.8000000000001 50.6 l3.2 1 l-2.4 2.6 z M758.1999999999999 59.4 l-3.2 -1 l2.4 -2.6 z" fill="#7ed090"/><rect x="748" y="60" width="12" height="3.5" fill="#7cc6f7"/><rect x="748" y="64.2" width="12" height="3.5" fill="#ececec"/><rect x="749.5" y="81.5" width="8.5" height="7.5" fill="#6f7786" stroke="#e0e0e0" stroke-width="1"/><rect x="748" y="88" width="2.2" height="2.2" fill="#e0e0e0"/><circle cx="758.3" cy="89" r="2.9" fill="#6f7786" stroke="#d8d8d8" stroke-width="1"/><circle cx="760" cy="79.3" r="3.6" fill="none" stroke="#3fa35a" stroke-width="2" stroke-dasharray="7.9 3.4"/><path d="M761.8000000000001 74.9 l3.2 1 l-2.4 2.6 z M758.1999999999999 83.69999999999999 l-3.2 -1 l2.4 -2.6 z" fill="#7ed090"/><rect x="748" y="100" width="13" height="4" fill="#7cc6f7"/><path d="M754.5 100 V108 M748.5 104 V108.5 M760.5 104 V107" stroke="#e0e0e0" stroke-width="1"/><rect x="748" y="108.5" width="6.5" height="5.8" fill="#e4e4e4"/><circle cx="760" cy="111.3" r="3.6" fill="none" stroke="#3fa35a" stroke-width="2" stroke-dasharray="7.9 3.4"/><path d="M761.8000000000001 106.9 l3.2 1 l-2.4 2.6 z M758.1999999999999 115.69999999999999 l-3.2 -1 l2.4 -2.6 z" fill="#7ed090"/><defs><clipPath id="c1"><rect x="783.7" y="50.8" width="32" height="32.2" rx="3.5"/></clipPath><clipPath id="c2"><rect x="833.4" y="50.8" width="32.4" height="32.2" rx="3.5"/></clipPath><clipPath id="c3"><rect x="884.8" y="50.8" width="32" height="32.2" rx="3.5"/></clipPath></defs><g clip-path="url(#c1)"><rect x="783.70" y="50" width="4.04" height="34" fill="#c81626"/><rect x="787.44" y="50" width="5.92" height="34" fill="#ec2a3a"/><rect x="793.06" y="50" width="6.54" height="34" fill="#f6505a"/><rect x="799.2" y="50" width="17" height="34" fill="#077a33"/><path d="M807 50 H816 V59 Z" fill="#3b4453"/><path d="M807 50.6 L815.4 58.8 C809.5 60.3,805.6 56.5,807 50.6 Z" fill="#7fdcae"/></g><g clip-path="url(#c2)"><rect x="833.40" y="50" width="4.09" height="34" fill="#c81626"/><rect x="837.19" y="50" width="5.99" height="34" fill="#ec2a3a"/><rect x="842.88" y="50" width="6.62" height="34" fill="#f6505a"/><rect x="849.2" y="50" width="17" height="34" fill="#077a33"/><path d="M857.5 50 H866 V58.5 Z" fill="#3b4453"/><path d="M857.5 50.6 L865.7 58.6 C860 60,856.2 56.3,857.5 50.6 Z" fill="#7fdcae"/></g><path d="M838.9 59.7 H859.5 V75.3 H838.9 Z M849.2 59.7 V75.3 M838.9 67.5 H859.5" stroke="#f2fff4" stroke-width="1.4" fill="none"/><g clip-path="url(#c3)"><rect x="884" y="50" width="16.7" height="34" fill="#077a33"/><rect x="900.60" y="50" width="6.78" height="34" fill="#f6505a"/><rect x="907.08" y="50" width="6.13" height="34" fill="#ec2a3a"/><rect x="912.91" y="50" width="4.19" height="34" fill="#c81626"/><path d="M884 50 H893.5 L884 59 Z" fill="#3b4453"/><path d="M893.3 50.6 L885 58.7 C890.8 60,894.6 56.3,893.3 50.6 Z" fill="#7fdcae"/></g><path d="M890.1 59.7 H910.7 V75.3 H890.1 Z M900.5 59.7 V75.3 M890.1 67.5 H910.7" stroke="#f2fff4" stroke-width="1.4" fill="none"/><rect x="937" y="51" width="32" height="32" rx="4.5" fill="url(#blu)"/><rect x="941" y="56" width="9" height="9" fill="#ececec"/><path d="M957.5 56 L966.5 60.2 L957.5 64.5 Z" fill="#f4f4f4"/><path d="M941 70.5 H950.5 L945.7 79.5 Z" fill="#f4f4f4"/><path d="M962.5 69.0 L958.5 75.3 H961.2 L959.7 80.3 L964.7 73.3 H961.8 L964.1 69.0 Z" fill="#fbd21e" stroke="#3a3000" stroke-width="0.4"/><rect x="983" y="51" width="32" height="32" rx="4.5" fill="url(#blu)"/><path d="M991.3 51.5 V67 M984 59.5 H999" stroke="#f4f4f4" stroke-width="1.2"/><rect x="989.3" y="57.5" width="4" height="4" fill="none" stroke="#f4f4f4" stroke-width="1"/><path d="M994 62.5 H1011 V80 H994 Z M994 67 H1011 M994 71.3 H1011 M994 75.6 H1011 M1000 62.5 V80" stroke="#f4f4f4" stroke-width="1.2" fill="none"/><path d="M1033 58.5 L1042 57 L1057 70 L1046.5 81.5 L1034.5 70 Z" fill="#c4c4c4"/><path d="M1037.5 59 L1047 57.2 L1061 70.5 L1050.5 82 L1039 70.5 Z" fill="#dcdcdc"/><circle cx="1042.5" cy="62.6" r="1.3" fill="#4a4a4a"/><path d="M1044 69 L1051 62.5 M1046.5 71.5 L1053.5 65 M1049 74 L1056 67.5" stroke="#a8a8a8" stroke-width="0.9"/><text x="1057" y="65.5" font-size="17" text-anchor="middle" fill="#ffffff" font-family="Liberation Sans, sans-serif">A</text><path d="M1080 51 H1098 L1106 59 V71 H1080 Z" fill="#dedede"/><path d="M1098 51 V59 H1106 Z" fill="#f28a8a"/><rect x="1080" y="70.4" width="26" height="12.6" fill="#f27f7f"/><path d="M1093 61 H1102 V57.3 L1112 64 L1102 70.7 V67 H1093 Z" fill="#62b5f5"/><text x="1093" y="81" font-size="10.5" font-weight="bold" text-anchor="middle" fill="#ffffff" font-family="Liberation Sans, sans-serif" letter-spacing="-0.3">DXF</text><rect x="1130.7" y="51" width="32.6" height="32.3" rx="4.5" fill="url(#blu)"/><circle cx="1138.7" cy="59.5" r="5.6" fill="#fbfbfb"/><text x="1138.7" y="63.1" font-size="10" font-weight="bold" font-style="italic" text-anchor="middle" fill="#111" font-family="Liberation Sans, sans-serif">1</text><circle cx="1154.7" cy="59.5" r="5.6" fill="#fbfbfb"/><text x="1154.7" y="63.1" font-size="10" font-weight="bold" font-style="italic" text-anchor="middle" fill="#111" font-family="Liberation Sans, sans-serif">2</text><circle cx="1138.7" cy="75.3" r="5.6" fill="#fbfbfb"/><text x="1138.7" y="78.89999999999999" font-size="10" font-weight="bold" font-style="italic" text-anchor="middle" fill="#111" font-family="Liberation Sans, sans-serif">3</text><path d="M1155.8 69.5 L1151.8 75.8 H1154.5 L1153.0 80.8 L1158.0 73.8 H1155.1 L1157.3999999999999 69.5 Z" fill="#fbd21e" stroke="#3a3000" stroke-width="0.4"/><path d="M1210.5 54.5 Q1210.5 52.3 1212.7 52.3 H1223 L1227 56.5 V66.2 Q1227 68.4 1224.8 68.4 H1212.7 Q1210.5 68.4 1210.5 66.2 Z" fill="#3f8fe8"/><path d="M1210.5 54.5 Q1210.5 52.3 1212.7 52.3 H1218.7 V68.4 H1212.7 Q1210.5 68.4 1210.5 66.2 Z" fill="#e22a3a"/><path d="M1223 52.3 V56.5 H1227 Z" fill="#9ccaf8"/><circle cx="1216.5" cy="58.3" r="3.3" fill="none" stroke="#ffffff" stroke-width="1.3"/><path d="M1219 61 L1224 66" stroke="#ffffff" stroke-width="1.6" stroke-linecap="round"/><rect x="1215.8" y="76.5" width="9" height="9" fill="none" stroke="#4fa06e" stroke-width="1.1"/><rect x="1211.5" y="82" width="9" height="9" fill="none" stroke="#c8c8c8" stroke-width="1.1"/><path d="M1221 84 V93.0 L1223.2 91.0 L1224.8 94.5 L1226.4 93.8 L1224.9 90.5 H1227.8 Z" fill="#f4f4f4" stroke="#3b4453" stroke-width="0.5"/><rect x="-1.9" y="-8.2" width="3.8" height="4" fill="#e6e6e6" transform="translate(1218.7 108.4) rotate(0)"/><rect x="-1.9" y="-8.2" width="3.8" height="4" fill="#e6e6e6" transform="translate(1218.7 108.4) rotate(45)"/><rect x="-1.9" y="-8.2" width="3.8" height="4" fill="#e6e6e6" transform="translate(1218.7 108.4) rotate(90)"/><rect x="-1.9" y="-8.2" width="3.8" height="4" fill="#e6e6e6" transform="translate(1218.7 108.4) rotate(135)"/><rect x="-1.9" y="-8.2" width="3.8" height="4" fill="#e6e6e6" transform="translate(1218.7 108.4) rotate(180)"/><rect x="-1.9" y="-8.2" width="3.8" height="4" fill="#e6e6e6" transform="translate(1218.7 108.4) rotate(225)"/><rect x="-1.9" y="-8.2" width="3.8" height="4" fill="#e6e6e6" transform="translate(1218.7 108.4) rotate(270)"/><rect x="-1.9" y="-8.2" width="3.8" height="4" fill="#e6e6e6" transform="translate(1218.7 108.4) rotate(315)"/><circle cx="1218.7" cy="108.4" r="4.6" fill="none" stroke="#e6e6e6" stroke-width="3.2"/><path d="M1295 53 H1306.5 L1308.5 55 V65 L1305.5 67.5 H1297" stroke="#4f9c72" stroke-width="1.1" fill="none"/><circle cx="1302" cy="58.5" r="4.5" fill="#d8d8d8"/><path d="M1292 59 V68.0 L1294.2 66.0 L1295.8 69.5 L1297.4 68.8 L1295.9 65.5 H1298.8 Z" fill="#f4f4f4" stroke="#3b4453" stroke-width="0.5"/><rect x="1292" y="79" width="10.5" height="11" fill="#dcaa6c"/><path d="M1295 79.5 V77.8 H1296.5 L1297.2 76.3 L1298 77.8 H1299.5 V79.5 Z" fill="#ececec"/><path d="M1300 91.0 L1301 88.3 L1305.5 84.3 L1307.6 86.5 L1303 90.5 Z" fill="#e9a957"/><path d="M1305.5 84.3 L1306.6 83.3 L1308.7 85.5 L1307.6 86.5 Z" fill="#e2484c"/><path d="M1300 91.0 L1300.5 89.5 L1301.6 90.6 Z" fill="#444"/><circle cx="1293.7" cy="104.6" r="1.7" fill="#d8d8d8"/><circle cx="1299.5" cy="103.7" r="1.7" fill="#62b5f5"/><rect x="1303" y="100.3" width="3" height="3" fill="#62b5f5"/><path d="M1292 108 C1297 109.5,1303 108.5,1306.5 104.5" stroke="#d8d8d8" stroke-width="1" fill="none"/><path d="M1300 115.0 L1301 112.3 L1305.5 108.3 L1307.6 110.5 L1303 114.5 Z" fill="#e9a957"/><path d="M1305.5 108.3 L1306.6 107.3 L1308.7 109.5 L1307.6 110.5 Z" fill="#e2484c"/><path d="M1300 115.0 L1300.5 113.5 L1301.6 114.6 Z" fill="#444"/><defs><clipPath id="c4"><rect x="1347" y="51.4" width="32.2" height="32.8" rx="4.5"/></clipPath></defs><g clip-path="url(#c4)"><rect x="1347" y="51" width="9" height="34" fill="#3ea2f4"/><rect x="1355.5" y="51" width="24" height="16.2" fill="#ff0000"/><rect x="1355.5" y="69.7" width="24" height="15" fill="#0a8a0a"/><rect x="1353.6" y="51" width="2" height="34" fill="#ffffff"/><rect x="1347" y="67.2" width="33" height="2.5" fill="#ffffff"/></g><rect x="1349.6" y="64.3" width="8" height="8" fill="#ffffff"/><rect x="1351.4" y="66.1" width="4.4" height="4.4" fill="#1f5fc0"/><rect x="1352.6" y="67.3" width="2" height="2" fill="#9cd0ff"/><rect x="1400.8" y="51.4" width="28.2" height="28.3" fill="#ececec"/><rect x="1400.8" y="51.4" width="28.2" height="3.2" fill="#d4d4d4"/><rect x="1400.8" y="54.6" width="8" height="25.1" fill="#d8d8d8"/><path d="M1400.8 63 H1408.8" stroke="#bdbdbd" stroke-width="0.8"/><rect x="1402" y="52.3" width="1.3" height="1.3" fill="#444"/><text x="1423.5" y="82.5" font-size="16" font-style="italic" text-anchor="middle" fill="#4f7fb8" font-family="Liberation Serif, serif">(x)</text><rect x="1443.5" y="51.5" width="11.5" height="13" fill="#e0e0e0"/><path d="M1445.5 54.5 H1453 M1445.5 57.3 H1453 M1445.5 60 H1453 M1445.5 62.7 H1453" stroke="#9a9a9a" stroke-width="0.9"/><path d="M1450.5 56 L1458 65 M1458.5 56 L1451.5 65" stroke="#f2f2f2" stroke-width="1.4"/><circle cx="1451.2" cy="65.6" r="1.6" fill="none" stroke="#f2f2f2" stroke-width="1.1"/><circle cx="1458.2" cy="65.6" r="1.6" fill="none" stroke="#f2f2f2" stroke-width="1.1"/><rect x="1445.5" y="77.5" width="11.5" height="11" fill="#7e8694"/><path d="M1443.8 79.5 V76 H1447 M1455 76 H1458.7 V79.5 M1443.8 86.5 V90 H1447" stroke="#c8c8c8" stroke-width="1.1" fill="none"/><circle cx="1454.8" cy="86" r="3.2" fill="#7e8694" stroke="#d0d0d0" stroke-width="1.1"/><path d="M1457 88.5 L1459.5 91" stroke="#d0d0d0" stroke-width="1.2"/><path d="M1444 114.5 C1445 106,1449 104.5,1451 108 C1453 112.5,1457 113.5,1458.8 104" stroke="#d8d8d8" stroke-width="1.1" fill="none"/><path d="M1449 106.5 L1450 103.8 L1454.5 99.8 L1456.6 102 L1452 106 Z" fill="#e9a957"/><path d="M1454.5 99.8 L1455.6 98.8 L1457.7 101 L1456.6 102 Z" fill="#e2484c"/><path d="M1449 106.5 L1449.5 105 L1450.6 106.1 Z" fill="#444"/><circle cx="1475.3" cy="107" r="6" fill="none" stroke="#d8d8d8" stroke-width="1.1"/><path d="M1467.5 101.5 L1471 113.8 H1480 L1483.5 101.5 M1471 100.5 L1483 108" stroke="#9fb4cc" stroke-width="0.9" fill="none"/><path d="M1491.5 114.5 V108 C1491.5 102.5,1495 99.8,1500 99.8 H1507.5" stroke="#d8d8d8" stroke-width="1.1" fill="none"/><path d="M1515.5 114.5 V108.5 L1524 99.8 H1531.5" stroke="#d8d8d8" stroke-width="1.1" fill="none"/><path d="M1542.5 99.5 V105.5 M1539.5 102.5 H1545.5" stroke="#3fc46a" stroke-width="1.9"/><path d="M1542.5 113 L1548 105.5 L1552 113" stroke="#e0e0e0" stroke-width="1.1" fill="none"/><circle cx="1553" cy="106" r="1.8" fill="none" stroke="#e0e0e0" stroke-width="1"/><path d="M1541 115 l1 -3 l2 1.6 z M1553.5 115 l-1 -3 l-2 1.6 z" fill="#e0e0e0"/><path d="M1563.5 100.3 H1576.0 V111.8 H1563.5 Z M1563.5 103.3 H1576.0 M1563.5 106.2 H1576.0 M1563.5 109.0 H1576.0 M1567.7 103.3 V111.8 M1571.9 103.3 V111.8" stroke="#d4d4d4" stroke-width="1" fill="none"/><path d="M1571.0 114.3 L1572.0 111.6 L1576.5 107.6 L1578.6 109.8 L1574.0 113.8 Z" fill="#e9a957"/><path d="M1576.5 107.6 L1577.6 106.6 L1579.7 108.8 L1578.6 109.8 Z" fill="#e2484c"/><path d="M1571.0 114.3 L1571.5 112.8 L1572.6 113.89999999999999 Z" fill="#444"/><path d="M1602.5 55.5 V51.6 H1606.5 M1630 51.6 H1634 V55.5 M1634 78 V82 H1630 M1606.5 82 H1602.5 V78" stroke="#c8c8c8" stroke-width="1.1" fill="none"/><rect x="1604.3" y="53.5" width="28" height="26.5" fill="#6f7786" stroke="#dcdcdc" stroke-width="1.1"/><path d="M1613.6 53.5 V80 M1622.9 53.5 V80" stroke="#dcdcdc" stroke-width="1.1"/><rect x="1645.2" y="54" width="13.5" height="13" fill="#5a6170" stroke="#5b9bd8" stroke-width="1"/><path d="M1650.5 54.0 L1645.2 59.3" stroke="#a9b6c8" stroke-width="0.8"/><path d="M1655.8 54.0 L1645.2 64.6" stroke="#a9b6c8" stroke-width="0.8"/><path d="M1658.7 56.4 L1648.1 67.0" stroke="#a9b6c8" stroke-width="0.8"/><path d="M1658.7 61.7 L1653.4 67.0" stroke="#a9b6c8" stroke-width="0.8"/><path d="M1657 51.5 l1.1 2.6 l2.7 -0.9 l-1.3 2.5 l2.3 1.6 l-2.8 0.5 l0.2 2.8 l-2.2 -1.8 l-2.2 1.8 l0.2 -2.8 l-2.8 -0.5 l2.3 -1.6 l-1.3 -2.5 l2.7 0.9 z" fill="#fbc54a"/><rect x="1647.5" y="78" width="10" height="10" fill="#5a6170" stroke="#d0d0d0" stroke-width="1"/><path d="M1651.5 78.0 L1647.5 82.0" stroke="#a9b6c8" stroke-width="0.8"/><path d="M1655.5 78.0 L1647.5 86.0" stroke="#a9b6c8" stroke-width="0.8"/><path d="M1657.5 80.0 L1649.5 88.0" stroke="#a9b6c8" stroke-width="0.8"/><path d="M1657.5 84.0 L1653.5 88.0" stroke="#a9b6c8" stroke-width="0.8"/><path d="M1645 78 H1660 M1645 88 H1657 M1647.5 75.5 V90.5 M1657.5 75.5 V84" stroke="#d0d0d0" stroke-width="1"/><path d="M1652.5 90.7 L1653.5 88.0 L1658.0 84.0 L1660.1 86.2 L1655.5 90.2 Z" fill="#e9a957"/><path d="M1658.0 84.0 L1659.1 83.0 L1661.2 85.2 L1660.1 86.2 Z" fill="#e2484c"/><path d="M1652.5 90.7 L1653.0 89.2 L1654.1 90.3 Z" fill="#444"/><path d="M1645.2 100.5 H1657.7 V112.0 H1645.2 Z M1645.2 103.5 H1657.7 M1645.2 106.4 H1657.7 M1645.2 109.2 H1657.7 M1649.4 103.5 V112.0 M1653.6000000000001 103.5 V112.0" stroke="#d4d4d4" stroke-width="1" fill="none"/><path d="M1652.7 114.5 L1653.7 111.8 L1658.2 107.8 L1660.3 110.0 L1655.7 114.0 Z" fill="#e9a957"/><path d="M1658.2 107.8 L1659.3 106.8 L1661.4 109.0 L1660.3 110.0 Z" fill="#e2484c"/><path d="M1652.7 114.5 L1653.2 113.0 L1654.3 114.1 Z" fill="#444"/><path d="M1669.3 100.5 H1681.8 V112.0 H1669.3 Z M1669.3 103.5 H1681.8 M1669.3 106.4 H1681.8 M1669.3 109.2 H1681.8 M1673.5 103.5 V112.0 M1677.7 103.5 V112.0" stroke="#d4d4d4" stroke-width="1" fill="none"/><path d="M1676.8 114.5 L1677.8 111.8 L1682.3 107.8 L1684.3999999999999 110.0 L1679.8 114.0 Z" fill="#e9a957"/><path d="M1682.3 107.8 L1683.3999999999999 106.8 L1685.5 109.0 L1684.3999999999999 110.0 Z" fill="#e2484c"/><path d="M1676.8 114.5 L1677.3 113.0 L1678.3999999999999 114.1 Z" fill="#444"/><path d="M1693.4 100.5 H1705.9 V112.0 H1693.4 Z M1693.4 103.5 H1705.9 M1693.4 106.4 H1705.9 M1693.4 109.2 H1705.9 M1697.6000000000001 103.5 V112.0 M1701.8000000000002 103.5 V112.0" stroke="#d4d4d4" stroke-width="1" fill="none"/><path d="M1700.9 114.5 L1701.9 111.8 L1706.4 107.8 L1708.5 110.0 L1703.9 114.0 Z" fill="#e9a957"/><path d="M1706.4 107.8 L1707.5 106.8 L1709.6000000000001 109.0 L1708.5 110.0 Z" fill="#e2484c"/><path d="M1700.9 114.5 L1701.4 113.0 L1702.5 114.1 Z" fill="#444"/><path d="M1728.2 55.5 V52 H1732 M1754.5 52 H1758.4 V55.5 M1758.4 78 V82 H1754.5 M1732 82 H1728.2 V78" stroke="#c8c8c8" stroke-width="1.1" fill="none"/><rect x="1730" y="54" width="26.6" height="26" fill="#6f7786" stroke="#dcdcdc" stroke-width="1.1"/><path d="M1743.3 54 V68" stroke="#dcdcdc" stroke-width="1.1"/><rect x="1730.6" y="68" width="25.4" height="11.5" fill="#86cdfb"/><rect x="1806" y="51.6" width="16.5" height="16.5" fill="none" stroke="#4fa06e" stroke-width="1.1"/><rect x="1795.5" y="61.8" width="16.5" height="16.5" fill="none" stroke="#c8c8c8" stroke-width="1.1"/><path d="M1815.5 65.5 V80.35 L1819.13 77.05 L1821.77 82.825 L1824.41 81.67 L1821.935 76.225 H1826.72 Z" fill="#f4f4f4" stroke="#3b4453" stroke-width="0.5"/><path d="M1872.5 65 V51.6 H1900 V70" stroke="#4f9be0" stroke-width="1.1" fill="none"/><rect x="1872.5" y="65.3" width="13.5" height="13.2" fill="none" stroke="#c8c8c8" stroke-width="1.1"/><circle cx="1894.8" cy="73.5" r="5.3" fill="#3b4453" stroke="#ececec" stroke-width="1.4"/><path d="M1898.8 77.8 L1903.3 82.3" stroke="#d8a877" stroke-width="1.8" stroke-linecap="round"/></svg>
<svg style="left:0px;top:141px;" width="1929" height="31" viewBox="0 141 1929 31"><path d="M9 146 H20 C30 146,28 167.5,18 167.5 H9 Z" fill="#1e242d"/><path d="M22 167.5 C31 167.5,27 146,40 146 H142 Q152 146 152 156.7 Q152 167.5 142 167.5 Z" fill="#323a47"/><rect x="154" y="146" width="121" height="21.5" rx="10" fill="#323a47"/><rect x="277.5" y="146" width="188.0" height="21.5" rx="10" fill="#323a47"/><rect x="468" y="146" width="267" height="21.5" rx="10" fill="#323a47"/><rect x="738" y="146" width="270.5" height="21.5" rx="10" fill="#323a47"/><path d="M1005 169 C1014 169,1012 146,1023 146 H1123 C1134 146,1132 169,1141 169 Z" fill="#3b4453"/><path d="M1136 148 H1150 C1160 148,1158 166,1168 166 H1154 C1144 166,1146 148,1136 148 Z" fill="#323a47"/><path d="M254.3 152.3 L262.7 160.7 M262.7 152.3 L254.3 160.7" stroke="#c6c6c6" stroke-width="1.8"/><path d="M444.3 152.3 L452.7 160.7 M452.7 152.3 L444.3 160.7" stroke="#c6c6c6" stroke-width="1.8"/><path d="M714.3 152.3 L722.7 160.7 M722.7 152.3 L714.3 160.7" stroke="#c6c6c6" stroke-width="1.8"/><path d="M990.3 152.3 L998.7 160.7 M998.7 152.3 L990.3 160.7" stroke="#c6c6c6" stroke-width="1.8"/><path d="M1113.3 152.3 L1121.7 160.7 M1121.7 152.3 L1113.3 160.7" stroke="#e6e6e6" stroke-width="1.8"/><path d="M1152.5 153 V162 M1148 157.5 H1157" stroke="#e6e6e6" stroke-width="1.8"/></svg>
<div style="left:40px;top:149.5px;line-height:16px;font-size:12px;color:#d6d6d6;white-space:nowrap;letter-spacing:-0.27px;">Start</div>
<div style="left:163px;top:149.5px;line-height:16px;font-size:12px;color:#d6d6d6;white-space:nowrap;letter-spacing:-0.33px;">Test*</div>
<div style="left:286px;top:149.5px;line-height:16px;font-size:12px;color:#d6d6d6;white-space:nowrap;letter-spacing:-0.35px;">CUA TOILET MO RA NGOAI*</div>
<div style="left:476px;top:149.5px;line-height:16px;font-size:12px;color:#d6d6d6;white-space:nowrap;letter-spacing:0.06px;">20211202-</div>
<div style="left:533.4px;top:149.5px;line-height:16px;font-size:12px;color:#d6d6d6;white-space:nowrap;transform:scaleX(.674);transform-origin:0 50%;">ウェイブレット</div>
<div style="left:595.6px;top:149.5px;line-height:16px;font-size:12px;color:#d6d6d6;white-space:nowrap;transform:scaleX(.68);transform-origin:0 50%;">プロ</div>
<div style="left:612px;top:149.5px;line-height:16px;font-size:12px;color:#d6d6d6;white-space:nowrap;letter-spacing:-0.24px;">...lay file nay lam)*</div>
<div style="left:746px;top:149.5px;line-height:16px;font-size:12px;color:#d6d6d6;white-space:nowrap;letter-spacing:-0.50px;">âEâFâCâuâîâbâgâvâìâOâîèeû{Æfû-É}_201027*</div>
<div style="left:1022px;top:149.5px;line-height:16px;font-size:12px;color:#f0f0f0;white-space:nowrap;letter-spacing:-0.33px;">Test*</div>
<div style="left:1211.5px;top:1009.5px;width:149.5px;height:22px;background:#343c4a;"></div>
<div style="left:1366px;top:1009.5px;width:47.5px;height:22px;background:#343c4a;"></div>
<div style="left:1418px;top:1009.5px;width:63.5px;height:22px;background:#343c4a;"></div>
<div style="left:1486px;top:1009.5px;width:169px;height:22px;background:#343c4a;"></div>
<div style="left:1659.5px;top:1009.5px;width:104.5px;height:22px;background:#343c4a;"></div>
<div style="left:1768px;top:1009.5px;width:24px;height:22px;background:#343c4a;"></div>
<div style="left:1824.5px;top:1009.5px;width:56.5px;height:22px;background:#343c4a;"></div>
<div style="left:1883px;top:1009.5px;width:46px;height:22px;background:#343c4a;"></div>
<div style="left:1418.3px;top:1009.5px;width:22.700000000000045px;height:22px;background:#5b97d6;"></div>
<div style="left:1510px;top:1009.5px;width:23px;height:22px;background:#5b97d6;"></div>
<div style="left:1591.5px;top:1009.5px;width:22.700000000000045px;height:22px;background:#5b97d6;"></div>
<div style="left:1615.6px;top:1009.5px;width:22.600000000000136px;height:22px;background:#5b97d6;"></div>
<div style="left:1659.5px;top:1009.5px;width:22.700000000000045px;height:22px;background:#5b97d6;"></div>
<div style="left:1796.5px;top:1009.5px;width:23.5px;height:22px;background:#556b8c;"></div>
<div style="left:1221px;top:1012.5px;line-height:16px;font-size:12px;color:#f0f0f0;white-space:nowrap;letter-spacing:-0.19px;">102.5779, -8.8227, 0.0000</div>
<div style="left:1369.5px;top:1012.5px;line-height:16px;font-size:12px;color:#f0f0f0;white-space:nowrap;letter-spacing:-0.53px;">MODEL</div>
<div style="left:1736px;top:1012.5px;line-height:16px;font-size:12px;color:#f0f0f0;white-space:nowrap;letter-spacing:-0.6px;">1:1</div>
<svg style="left:1200px;top:1005px;" width="729" height="30" viewBox="1200 1005 729 30"><path d="M1423 1015.5 H1437 M1423 1020.5 H1437 M1423 1025.5 H1437 M1425.5 1013 V1028 M1430 1013 V1028 M1434.5 1013 V1028" stroke="#f2f2f2" stroke-width="1.1"/><rect x="1447.5" y="1014.5" width="2" height="2" fill="#d6d6d6"/><rect x="1447.5" y="1019.7" width="2" height="2" fill="#d6d6d6"/><rect x="1447.5" y="1024.9" width="2" height="2" fill="#d6d6d6"/><rect x="1452.7" y="1014.5" width="2" height="2" fill="#d6d6d6"/><rect x="1452.7" y="1019.7" width="2" height="2" fill="#d6d6d6"/><rect x="1452.7" y="1024.9" width="2" height="2" fill="#d6d6d6"/><rect x="1457.9" y="1014.5" width="2" height="2" fill="#d6d6d6"/><rect x="1457.9" y="1019.7" width="2" height="2" fill="#d6d6d6"/><rect x="1457.9" y="1024.9" width="2" height="2" fill="#d6d6d6"/><path d="M1469.8999999999999 1019 h6.8 l-3.4 3.8 z" fill="#d6d6d6"/><path d="M1537.6 1019 h6.8 l-3.4 3.8 z" fill="#d6d6d6"/><path d="M1577.8999999999999 1019 h6.8 l-3.4 3.8 z" fill="#d6d6d6"/><path d="M1643.6 1019 h6.8 l-3.4 3.8 z" fill="#d6d6d6"/><path d="M1752.6 1019 h6.8 l-3.4 3.8 z" fill="#d6d6d6"/><path d="M1490.5 1013 V1028 H1505 M1490.5 1023.5 H1495 V1028" stroke="#d6d6d6" stroke-width="1.1" fill="none"/><circle cx="1520.5" cy="1021" r="6.3" fill="none" stroke="#f2f2f2" stroke-width="1.2"/><path d="M1520.5 1021 H1530 M1520.5 1021 L1528 1012.5" stroke="#f2f2f2" stroke-width="1.1"/><path d="M1555.5 1013.5 L1567 1028" stroke="#9c3f4e" stroke-width="1.1"/><path d="M1561.5 1011.5 V1029" stroke="#3f8258" stroke-width="1.1"/><circle cx="1561.5" cy="1021" r="1.3" fill="#d0d0d0"/><path d="M1596 1027 H1611 M1596 1027 L1607.5 1013.5" stroke="#f2f2f2" stroke-width="1.2"/><rect x="1623" y="1015" width="12" height="12.5" fill="none" stroke="#f2f2f2" stroke-width="1.2"/><rect x="1619.5" y="1012.3" width="4.5" height="4.5" fill="#5b97d6" stroke="#f2f2f2" stroke-width="1"/><path d="M1668.5 1012.5 L1670.8 1020.5 L1675.5 1027.5 L1669.7 1024 L1668.5 1028.5 L1667.3 1024 L1661.5 1027.5 L1666.2 1020.5 Z" fill="#f2f2f2"/><circle cx="1676" cy="1015" r="2" fill="none" stroke="#f2f2f2" stroke-width="1"/><path d="M1693.5 1012.5 L1695.8 1020.5 L1700.5 1027.5 L1694.7 1024 L1693.5 1028.5 L1692.3 1024 L1686.5 1027.5 L1691.2 1020.5 Z" fill="#d6d6d6"/><path d="M1700.5 1012 l-2.5 3.5 h1.8 l-1.2 3 l3.2 -4 h-1.8 z" fill="#d6d6d6"/><path d="M1718.5 1012.5 L1720.8 1020.5 L1725.5 1027.5 L1719.7 1024 L1718.5 1028.5 L1717.3 1024 L1711.5 1027.5 L1716.2 1020.5 Z" fill="#d6d6d6"/><rect x="1772.5" y="1013" width="5.5" height="5.5" fill="none" stroke="#d6d6d6" stroke-width="1"/><circle cx="1785" cy="1019.5" r="3" fill="none" stroke="#d6d6d6" stroke-width="1"/><path d="M1775.5 1028 L1778.5 1022.5 L1781.5 1028 Z" fill="none" stroke="#d6d6d6" stroke-width="1"/><circle cx="1808.3" cy="1020.5" r="7.8" fill="none" stroke="#8fa4c4" stroke-width="1.2"/><path d="M1804 1025 L1813 1016" stroke="#9fb2cf" stroke-width="2"/><path d="M1826 1012 H1840 L1844 1016 V1029 H1826 Z" fill="#2f6fc8"/><rect x="1826" y="1022" width="10" height="7.5" fill="#f0b93a"/><circle cx="1831.5" cy="1013.5" r="2.6" fill="none" stroke="#e8f0ff" stroke-width="1.1"/><path d="M1831.5 1009.5 V1021 M1826.5 1013.5 H1837" stroke="#e8f0ff" stroke-width="1"/><path d="M1836 1025 L1840 1029 L1848.5 1020" stroke="#3fae4f" stroke-width="2.6" fill="none"/><rect x="1857" y="1013" width="15.5" height="12" fill="#dcdcdc"/><path d="M1857.5 1024 C1860 1012,1863 1012,1865 1019 C1867 1025,1870 1024,1872 1014" stroke="#555" stroke-width="1" fill="none"/><path d="M1868.5 1018.5 L1873.5 1028.5 H1863.5 Z" fill="#f2a65e"/><rect x="1886.5" y="1014" width="15.5" height="12.5" fill="none" stroke="#d6d6d6" stroke-width="1.1"/><path d="M1895 1016.5 H1899.5 V1021 M1899.5 1016.5 L1895.5 1020.5 M1893.5 1024 H1889 V1019.5 M1889 1024 L1893 1020" stroke="#d6d6d6" stroke-width="1.1" fill="none"/><path d="M1911 1014.5 H1926 M1911 1020.5 H1926 M1911 1026.5 H1926" stroke="#f2f2f2" stroke-width="2"/></svg>
<svg style="left:1760px;top:172px;" width="169" height="450" viewBox="1760 172 169 450"><circle cx="1848" cy="277" r="54" fill="none" stroke="rgba(200,210,235,.25)" stroke-width="14"/><rect x="1822.5" y="251" width="52" height="51.5" fill="#c9c9c9"/><rect x="1832" y="260.5" width="33" height="32.5" fill="#b6b6b6"/><text x="1848" y="228" font-size="20.5" font-weight="bold" text-anchor="middle" fill="#bdbdbd" font-family="Liberation Sans, sans-serif">N</text><text x="1848" y="340.5" font-size="20.5" font-weight="bold" text-anchor="middle" fill="#bdbdbd" font-family="Liberation Sans, sans-serif">S</text><text x="1792" y="284.5" font-size="20.5" font-weight="bold" text-anchor="middle" fill="#bdbdbd" font-family="Liberation Sans, sans-serif">W</text><text x="1905" y="284.5" font-size="20.5" font-weight="bold" text-anchor="middle" fill="#bdbdbd" font-family="Liberation Sans, sans-serif">E</text><text x="1838.3" y="282" font-size="14" font-weight="bold" fill="#5a606e" font-family="Liberation Sans, sans-serif" textLength="20.5" lengthAdjust="spacingAndGlyphs">TOP</text><rect x="1825" y="363.5" width="46" height="16.5" rx="3.5" fill="#8e929b"/><rect x="1826" y="364.5" width="44" height="14.5" rx="3" fill="#a7abb3"/><text x="1841" y="375.5" font-size="10.5" text-anchor="middle" fill="#555a64" font-family="Liberation Sans, sans-serif">WCS</text><path d="M1859 370 h5 l-2.5 3 z" fill="#8e929b"/><rect x="1872.5" y="186" width="8" height="2.2" fill="#e8e8e8"/><path d="M1892 183.5 H1898 V189.5 H1892 Z M1894 183.5 V181.5 H1900 V187.5 H1898" stroke="#e8e8e8" stroke-width="1.5" fill="none"/><path d="M1913 181.5 L1919.5 188.5 M1919.5 181.5 L1913 188.5" stroke="#e8e8e8" stroke-width="2"/><rect x="1898" y="403" width="34" height="207" rx="3" fill="#5d626d" stroke="#6b707b" stroke-width="1"/><circle cx="1915" cy="430.5" r="9" fill="none" stroke="#7d828c" stroke-width="2"/><circle cx="1915" cy="430.5" r="4.5" fill="none" stroke="#7d828c" stroke-width="1.5"/><rect x="1919" y="405.5" width="5" height="5" fill="none" stroke="#7d828c" stroke-width="1"/><path d="M1907 478 C1905 470,1908 466,1911 470 V463 Q1912.5 461 1914 463 V461 Q1915.5 459 1917 461.5 V463 Q1918.5 461.5 1920 464 V467 Q1921.5 466 1922.5 468.5 V478 Q1918 484 1911 482 Z" fill="none" stroke="#7d828c" stroke-width="1.5"/><path d="M1903 489 L1920 507 M1920 489 L1903 507" stroke="#7d828c" stroke-width="1.6"/><circle cx="1919.5" cy="505.5" r="4.5" fill="#5d626d" stroke="#7d828c" stroke-width="1.5"/><path d="M1922.5 509 L1926 513" stroke="#7d828c" stroke-width="2"/><path d="M1914 529 l-5 6 h3 v14 h4 v-14 h3 z" fill="none" stroke="#7d828c" stroke-width="1.4"/><ellipse cx="1914" cy="544" rx="10" ry="4.5" fill="none" stroke="#7d828c" stroke-width="1.4"/><rect x="1902" y="569" width="6" height="4" fill="none" stroke="#7d828c" stroke-width="1"/><rect x="1910" y="569" width="6" height="4" fill="none" stroke="#7d828c" stroke-width="1"/><rect x="1918" y="569" width="6" height="4" fill="none" stroke="#7d828c" stroke-width="1"/><rect x="1902" y="576" width="17" height="12" fill="none" stroke="#7d828c" stroke-width="1.4"/><path d="M1908 579 l6 3.2 l-6 3.2 z" fill="#7d828c"/><rect x="1912.5" y="449" width="3" height="2.5" fill="#7d828c"/><rect x="1912.5" y="518" width="3" height="2.5" fill="#7d828c"/><rect x="1912.5" y="557" width="3" height="2.5" fill="#7d828c"/><rect x="1919" y="601.5" width="5" height="5" fill="none" stroke="#7d828c" stroke-width="1"/></svg>
</body></html>
